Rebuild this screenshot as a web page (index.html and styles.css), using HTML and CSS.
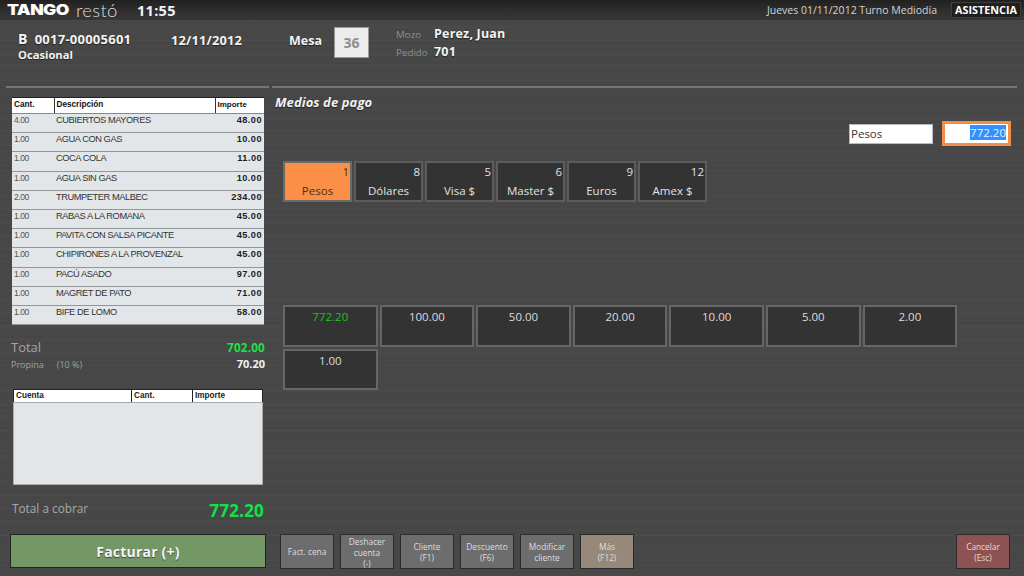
FILE: index.html
```html
<!DOCTYPE html>
<html lang="es">
<head>
<meta charset="utf-8">
<title>Tango Restó</title>
<link rel="stylesheet" href="styles.css">
</head>
<body>
<div class="app">
  <header class="topbar">
    <div class="logo"><span class="logo-tango">TANGO</span><span class="logo-resto">restó</span></div>
    <div class="clock">11:55</div>
    <div class="shift">Jueves 01/11/2012 Turno Mediodía</div>
    <div class="attendance">ASISTENCIA</div>
  </header>

  <section class="info">
    <div class="doc">
      <div class="doc-num"><span class="doc-letter">B</span>0017-00005601</div>
      <div class="doc-client">Ocasional</div>
    </div>
    <div class="doc-date">12/11/2012</div>
    <div class="mesa">Mesa</div>
    <div class="mesa-box">36</div>
    <div class="waiter">
      <div class="waiter-row"><span class="waiter-label">Mozo</span><span class="waiter-value">Perez, Juan</span></div>
      <div class="waiter-row"><span class="waiter-label">Pedido</span><span class="waiter-value">701</span></div>
    </div>
  </section>

  <div class="rules"><div class="rule rule-left"></div><div class="rule rule-right"></div></div>

  <main class="body">
    <aside class="left">
      <table class="items">
        <thead><tr><th class="c1">Cant.</th><th class="c2">Descripción</th><th class="c3">Importe</th></tr></thead>
        <tbody>
          <tr><td class="c1">4.00</td><td class="c2">CUBIERTOS MAYORES</td><td class="c3">48.00</td></tr>
          <tr><td class="c1">1.00</td><td class="c2">AGUA CON GAS</td><td class="c3">10.00</td></tr>
          <tr><td class="c1">1.00</td><td class="c2">COCA COLA</td><td class="c3">11.00</td></tr>
          <tr><td class="c1">1.00</td><td class="c2">AGUA SIN GAS</td><td class="c3">10.00</td></tr>
          <tr><td class="c1">2.00</td><td class="c2">TRUMPETER MALBEC</td><td class="c3">234.00</td></tr>
          <tr><td class="c1">1.00</td><td class="c2">RABAS A LA ROMANA</td><td class="c3">45.00</td></tr>
          <tr><td class="c1">1.00</td><td class="c2">PAVITA CON SALSA PICANTE</td><td class="c3">45.00</td></tr>
          <tr><td class="c1">1.00</td><td class="c2">CHIPIRONES A LA PROVENZAL</td><td class="c3">45.00</td></tr>
          <tr><td class="c1">1.00</td><td class="c2">PACÚ ASADO</td><td class="c3">97.00</td></tr>
          <tr><td class="c1">1.00</td><td class="c2">MAGRET DE PATO</td><td class="c3">71.00</td></tr>
          <tr><td class="c1">1.00</td><td class="c2">BIFE DE LOMO</td><td class="c3">58.00</td></tr>
        </tbody>
      </table>

      <div class="total-row"><span class="total-label">Total</span><span class="total-value">702.00</span></div>
      <div class="tip-row"><span class="tip-label">Propina<span class="tip-pct">(10 %)</span></span><span class="tip-value">70.20</span></div>

      <div class="accounts">
        <div class="accounts-head"><span class="a1">Cuenta</span><span class="a2">Cant.</span><span class="a3">Importe</span></div>
        <div class="accounts-body"></div>
      </div>

      <div class="charge-row"><span class="charge-label">Total a cobrar</span><span class="charge-value">772.20</span></div>
      <button class="invoice">Facturar (+)</button>
    </aside>

    <section class="right">
      <h2 class="title">Medios de pago</h2>
      <div class="inputs">
        <div class="field-name">Pesos</div>
        <div class="field-amount"><span class="selected">772.20</span></div>
      </div>
      <div class="methods">
        <div class="method active"><span class="method-n">1</span><span class="method-l">Pesos</span></div>
        <div class="method"><span class="method-n">8</span><span class="method-l">Dólares</span></div>
        <div class="method"><span class="method-n">5</span><span class="method-l">Visa $</span></div>
        <div class="method"><span class="method-n">6</span><span class="method-l">Master $</span></div>
        <div class="method"><span class="method-n">9</span><span class="method-l">Euros</span></div>
        <div class="method"><span class="method-n">12</span><span class="method-l">Amex $</span></div>
      </div>
      <div class="bills">
        <div class="bill exact">772.20</div>
        <div class="bill">100.00</div>
        <div class="bill">50.00</div>
        <div class="bill">20.00</div>
        <div class="bill">10.00</div>
        <div class="bill">5.00</div>
        <div class="bill">2.00</div>
        <div class="bill">1.00</div>
      </div>
      <div class="actions">
        <button class="action">Fact. cena</button>
        <button class="action tight">Deshacer<br>cuenta<br>(-)</button>
        <button class="action">Cliente<br>(F1)</button>
        <button class="action">Descuento<br>(F6)</button>
        <button class="action">Modificar<br>cliente</button>
        <button class="action more">Más<br>(F12)</button>
        <button class="action cancel">Cancelar<br>(Esc)</button>
      </div>
    </section>
  </main>
</div>
</body>
</html>
```

FILE: styles.css
```css
* { box-sizing: border-box; }
html, body { margin: 0; padding: 0; }
body { width: 1024px; height: 576px; overflow: hidden; font-family: "Open Sans", "Noto Sans", sans-serif; color: #fff; background: #454545; }

.app {
  width: 1024px; height: 576px; display: flex; flex-direction: column; overflow: hidden;
  background-color: #474747;
  background-image:
    repeating-linear-gradient(180deg, rgba(255,255,255,.012) 0 1px, transparent 1px 5px),
    repeating-linear-gradient(180deg, rgba(0,0,0,.018) 0 2px, transparent 2px 7px),
    repeating-linear-gradient(180deg, rgba(255,255,255,.01) 0 3px, transparent 3px 13px);
}

.topbar {
  height: 20px; flex: none; display: flex; align-items: center; padding: 0 3px 0 7px;
  background: linear-gradient(180deg, #202020 0%, #2e2e2e 50%, #363636 100%);
}
.logo { display: flex; align-items: center; width: 130px; height: 20px; }
.logo-tango { display: inline-block; font-family: "Inter", "Liberation Sans", sans-serif; font-weight: 900; font-size: 14.5px; letter-spacing: -.5px; color: #fff; width: 69px; line-height: 20px; transform: scaleX(1.21); transform-origin: left center; }
.logo-resto { font-family: "Lato", sans-serif; font-weight: 300; font-size: 18.5px; line-height: 20px; letter-spacing: .3px; color: #dcdcdc; }
.clock { font-weight: 700; font-size: 14.5px; letter-spacing: .3px; color: #f2f2f2; }
.shift { margin-left: auto; font-size: 10.5px; color: #d4d4d4; }
.attendance { margin-left: 14px; width: 70px; height: 16px; background: #1f1f1f; border: 1px solid #3f3f3f; text-align: center; font-weight: 700; font-size: 10.8px; line-height: 14px; color: #fff; }

.info { height: 66px; flex: none; display: flex; align-items: flex-start; padding: 0 0 0 18px; }
.doc { width: 153px; margin-top: 11px; font-weight: 700; font-size: 13px; line-height: 15px; color: #f4f4f4; text-shadow: 0 1px 1px #222; }
.doc-letter { font-size: 14px; margin-right: 7px; }
.doc-num { letter-spacing: .25px; }
.doc-client { font-size: 11.2px; line-height: 15px; }
.doc-date { width: 118px; margin-top: 11px; font-weight: 700; font-size: 12.8px; line-height: 18px; letter-spacing: .2px; color: #f4f4f4; text-shadow: 0 1px 1px #222; }
.mesa { width: 45px; margin-top: 11px; font-weight: 700; font-size: 12.5px; line-height: 19px; color: #f4f4f4; text-shadow: 0 1px 1px #222; }
.mesa-box { width: 35px; height: 31px; margin-top: 7px; background: #ececec; border: 1px solid #999; text-align: center; font-weight: 700; font-size: 14px; line-height: 30px; color: #8e8e8e; }
.waiter { margin-left: 27px; margin-top: 5px; }
.waiter-row { display: flex; align-items: center; height: 17.5px; }
.waiter-label { width: 38px; font-size: 9.8px; color: #8f8f8f; padding-top: 2px; }
.waiter-value { font-weight: 700; font-size: 12.5px; letter-spacing: .2px; color: #f4f4f4; text-shadow: 0 1px 1px #222; }

.rules { height: 2px; flex: none; display: flex; }
.rule { height: 2px; background: #767676; }
.rule-left { width: 263px; margin-left: 6px; }
.rule-right { width: 745px; margin-left: 3px; }

.body { flex: 1; display: flex; min-height: 0; }

.left { width: 272px; flex: none; padding: 9px 0 0 10px; display: flex; flex-direction: column; }

.items { width: 252px; margin-left: 2px; border-collapse: collapse; table-layout: fixed; font-family: "Liberation Sans", sans-serif; background: #e2e6e9; color: #333; }
.items th { height: 16px; padding: 0 2px 3px; background: #fff; color: #111; font-size: 8.2px; font-weight: 700; text-align: left; border-left: 1px solid #333; border-bottom: 1px solid #888; border-top: 1px solid #222; }
.items th:first-child { border-left: 0; }
.items td { height: 19.2px; padding: 0 2px 6px; font-size: 9.3px; line-height: 12px; border-bottom: 1px solid #93979a; white-space: nowrap; letter-spacing: -.45px; }
.items .c1 { width: 42px; }
.items td.c1 { color: #555; font-size: 8.6px; }
.items .c2 { width: 161px; }
.items td.c3 { text-align: right; font-weight: 700; font-size: 9.2px; letter-spacing: .45px; color: #222; }
.items th.c3 { font-size: 8px; }

.total-row { display: flex; justify-content: space-between; align-items: baseline; margin: 13px 7px 0 1px; height: 18px; }
.total-label { font-size: 13px; color: #a4a4a4; }
.total-value { font-weight: 700; font-size: 11.7px; letter-spacing: .2px; color: #1fe04c; }
.tip-row { display: flex; justify-content: space-between; align-items: baseline; margin: 0 7px 0 1px; height: 17px; }
.tip-label { font-size: 9px; color: #a0a0a0; }
.tip-pct { margin-left: 13px; }
.tip-value { font-weight: 700; font-size: 11px; color: #f2f2f2; }

.accounts { width: 250px; margin: 16px 0 0 3px; }
.accounts-head { height: 13px; display: flex; background: #fff; border-top: 1px solid #222; font-family: "Liberation Sans", sans-serif; font-weight: 700; font-size: 8.2px; line-height: 11px; color: #222; }
.a1 { width: 118px; padding-left: 2px; border-left: 1px solid #222; }
.a2 { width: 61px; padding-left: 2px; border-left: 1px solid #222; }
.a3 { flex: 1; padding-left: 2px; border-left: 1px solid #222; border-right: 1px solid #222; }
.accounts-body { height: 83px; background: #e3e6e8; border: 1px solid #aaa; }

.charge-row { display: flex; justify-content: space-between; align-items: flex-start; margin: 13px 8px 0 2px; height: 27px; }
.charge-label { font-size: 11.8px; line-height: 20px; color: #a8a8a8; }
.charge-value { font-weight: 700; font-size: 17px; line-height: 26px; letter-spacing: .2px; color: #12e24a; }

.invoice { width: 256px; height: 34px; margin-top: 9px; padding: 0; border: 1px solid #222; background: #739765; color: #f6f6f6; font-family: inherit; font-weight: 700; font-size: 14px; letter-spacing: .2px; text-shadow: 0 1px 1px #444; }

.right { flex: 1; display: flex; flex-direction: column; padding-left: 3px; }
.title { margin: 6px 0 0; font-size: 13px; line-height: 17px; font-style: italic; font-weight: 700; color: #f2f2f2; letter-spacing: .1px; text-shadow: 0 1px 1px #222; }
.inputs { display: flex; align-items: center; justify-content: flex-end; height: 25px; margin-top: 10px; padding-right: 13px; gap: 9px; }
.field-name { width: 84px; height: 20px; background: #fff; border: 1px solid #bbb; padding-left: 1px; font-size: 11.5px; line-height: 17px; color: #333; }
.field-amount { width: 69px; height: 25px; background: #fff; border: 3px solid #f08f48; text-align: right; padding-right: 2px; font-size: 11.5px; line-height: 17px; }
.selected { background: #3390ff; color: #eaf3ff; }

.methods { display: flex; gap: 2px; margin: 15px 0 0 8px; }
.method { width: 69px; height: 41px; background: #333; border: 2px solid #5c5c5c; display: flex; flex-direction: column; color: #e2e2e2; font-size: 11.5px; }
.method-n { text-align: right; padding-right: 1px; line-height: 17px; }
.method-l { text-align: center; line-height: 19px; margin-top: 1px; }
.method.active { background: #fb8f48; color: #4a3018; border-color: #6a6a6a; }

.bills { display: grid; grid-template-columns: repeat(7, 94.6px); gap: 2px; margin: 103px 0 0 8px; width: 680px; }
.bill { height: 41.5px; background: #333; border: 2px solid #666; text-align: center; font-size: 11.5px; line-height: 19px; color: #dcdcdc; }
.bill.exact { color: #1fc21f; }

.actions { display: flex; gap: 6px; margin-top: 144px; margin-left: 5px; padding-right: 14px; }
.action { width: 54px; height: 35px; padding: 0; background: #6d6d6d; border: 1px solid #2a2a2a; color: #dedede; font-family: inherit; font-size: 8.3px; line-height: 11px; }
.action.tight { padding-top: 1px; line-height: 11px; }
.action.more { background: #96897a; }
.action.cancel { margin-left: auto; background: #8d5252; color: #e8dcdc; }
```
